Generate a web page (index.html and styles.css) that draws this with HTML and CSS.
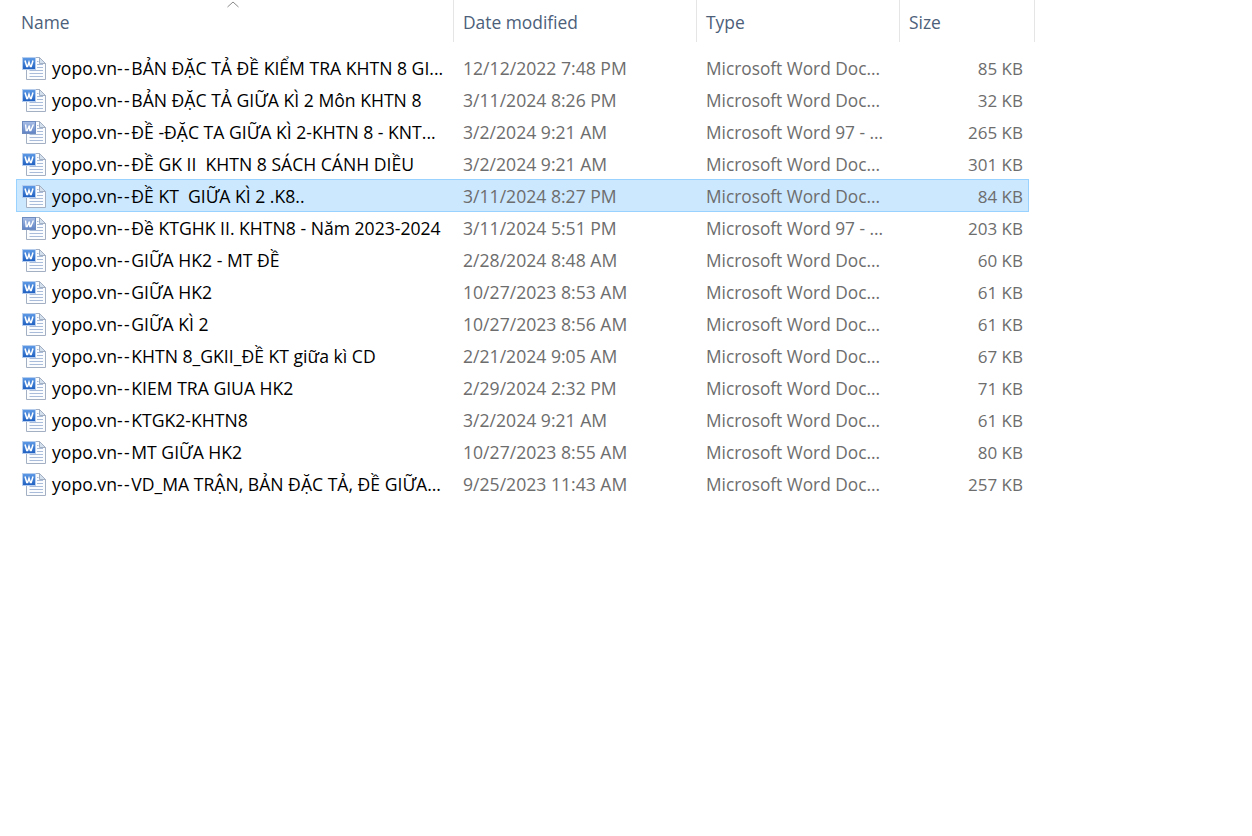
FILE: index.html
```html
<!DOCTYPE html>
<html lang="en">

<head>
  <meta charset="UTF-8">
  <title>Files</title>
  <link rel="stylesheet" href="styles.css">
</head>

<body>
  <svg class="defs" width="0" height="0">
    <linearGradient id="blue" x1="0" y1="0" x2="0" y2="1">
      <stop offset="0" stop-color="#5f9be6"/>
      <stop offset="1" stop-color="#1f5fc0"/>
    </linearGradient>
    <linearGradient id="pale" x1="0" y1="0" x2="0" y2="1">
      <stop offset="0" stop-color="#a9bfe6"/>
      <stop offset="1" stop-color="#5f82c4"/>
    </linearGradient>
    <symbol id="page" viewBox="0 0 24 24">
      <path d="M4.5 1.5H17.5L23.5 7.5V23.5H4.5Z" fill="#fbfcfe" stroke="#a3afc2"/>
      <path d="M17.5 1.5V7.5H23.5Z" fill="#d5e0ef" stroke="#a3afc2"/>
      <path d="M15 5.5H16.5M15 8.5H21M15 11.5H21M7.5 14.5H21M7.5 17.5H21M7.5 20.5H21" stroke="#a9bddb"/>
    </symbol>
    <symbol id="docx" viewBox="0 0 24 24">
      <use href="#page"/>
      <rect x="0.5" y="1.5" width="13" height="12" fill="url(#blue)" stroke="#b5cdee"/>
      <path d="M3 4.5L4.8 10.5H5.6L7 6.2L8.4 10.5H9.2L11 4.5" fill="none" stroke="#fff" stroke-width="1.5"/>
    </symbol>
    <symbol id="doc" viewBox="0 0 24 24">
      <use href="#page"/>
      <rect x="0.5" y="1.5" width="13" height="12" fill="url(#pale)" stroke="#6f8cc0"/>
      <path d="M3.6 4.5L4.2 10.5H5.2L7.4 5.5L7.8 10.5H8.8L11.4 4.5" fill="none" stroke="#fff" stroke-width="1.4"/>
    </symbol>
  </svg>

  <div class="list">
    <div class="head">
      <div class="col col-name">Name
        <svg class="sort" width="14" height="7" viewBox="0 0 14 7"><path d="M1.5 6L7 1L12.5 6" fill="none" stroke="#8a8a8a"/></svg>
      </div>
      <div class="col col-date">Date modified</div>
      <div class="col col-type">Type</div>
      <div class="col col-size">Size</div>
    </div>

    <div class="rows">
      <div class="row">
        <div class="name"><svg class="icon"><use href="#docx"/></svg><span>yopo.vn<span class="dash">--</span>BẢN ĐẶC TẢ ĐỀ KIỂM TRA KHTN 8 GI...</span></div>
        <div class="cell date">12/12/2022 7:48 PM</div><div class="cell type">Microsoft Word Doc...</div><div class="cell size">85 KB</div>
      </div>
      <div class="row">
        <div class="name"><svg class="icon"><use href="#docx"/></svg><span>yopo.vn<span class="dash">--</span>BẢN ĐẶC TẢ GIỮA KÌ 2 Môn KHTN 8</span></div>
        <div class="cell date">3/11/2024 8:26 PM</div><div class="cell type">Microsoft Word Doc...</div><div class="cell size">32 KB</div>
      </div>
      <div class="row">
        <div class="name"><svg class="icon"><use href="#doc"/></svg><span>yopo.vn<span class="dash">--</span>ĐỀ -ĐẶC TA GIỮA KÌ 2-KHTN 8 - KNT...</span></div>
        <div class="cell date">3/2/2024 9:21 AM</div><div class="cell type">Microsoft Word 97 - ...</div><div class="cell size">265 KB</div>
      </div>
      <div class="row">
        <div class="name"><svg class="icon"><use href="#docx"/></svg><span>yopo.vn<span class="dash">--</span>ĐỀ GK II&nbsp; KHTN 8 SÁCH CÁNH DIỀU</span></div>
        <div class="cell date">3/2/2024 9:21 AM</div><div class="cell type">Microsoft Word Doc...</div><div class="cell size">301 KB</div>
      </div>
      <div class="row selected">
        <div class="name"><svg class="icon"><use href="#docx"/></svg><span>yopo.vn<span class="dash">--</span>ĐỀ KT&nbsp; GIỮA KÌ 2 .K8..</span></div>
        <div class="cell date">3/11/2024 8:27 PM</div><div class="cell type">Microsoft Word Doc...</div><div class="cell size">84 KB</div>
      </div>
      <div class="row">
        <div class="name"><svg class="icon"><use href="#doc"/></svg><span>yopo.vn<span class="dash">--</span>Đề KTGHK II. KHTN8 - Năm 2023-2024</span></div>
        <div class="cell date">3/11/2024 5:51 PM</div><div class="cell type">Microsoft Word 97 - ...</div><div class="cell size">203 KB</div>
      </div>
      <div class="row">
        <div class="name"><svg class="icon"><use href="#docx"/></svg><span>yopo.vn<span class="dash">--</span>GIỮA HK2 - MT ĐỀ</span></div>
        <div class="cell date">2/28/2024 8:48 AM</div><div class="cell type">Microsoft Word Doc...</div><div class="cell size">60 KB</div>
      </div>
      <div class="row">
        <div class="name"><svg class="icon"><use href="#docx"/></svg><span>yopo.vn<span class="dash">--</span>GIỮA HK2</span></div>
        <div class="cell date">10/27/2023 8:53 AM</div><div class="cell type">Microsoft Word Doc...</div><div class="cell size">61 KB</div>
      </div>
      <div class="row">
        <div class="name"><svg class="icon"><use href="#docx"/></svg><span>yopo.vn<span class="dash">--</span>GIỮA KÌ 2</span></div>
        <div class="cell date">10/27/2023 8:56 AM</div><div class="cell type">Microsoft Word Doc...</div><div class="cell size">61 KB</div>
      </div>
      <div class="row">
        <div class="name"><svg class="icon"><use href="#docx"/></svg><span>yopo.vn<span class="dash">--</span>KHTN 8_GKII_ĐỀ KT giữa kì CD</span></div>
        <div class="cell date">2/21/2024 9:05 AM</div><div class="cell type">Microsoft Word Doc...</div><div class="cell size">67 KB</div>
      </div>
      <div class="row">
        <div class="name"><svg class="icon"><use href="#docx"/></svg><span>yopo.vn<span class="dash">--</span>KIEM TRA GIUA HK2</span></div>
        <div class="cell date">2/29/2024 2:32 PM</div><div class="cell type">Microsoft Word Doc...</div><div class="cell size">71 KB</div>
      </div>
      <div class="row">
        <div class="name"><svg class="icon"><use href="#docx"/></svg><span>yopo.vn<span class="dash">--</span>KTGK2-KHTN8</span></div>
        <div class="cell date">3/2/2024 9:21 AM</div><div class="cell type">Microsoft Word Doc...</div><div class="cell size">61 KB</div>
      </div>
      <div class="row">
        <div class="name"><svg class="icon"><use href="#docx"/></svg><span>yopo.vn<span class="dash">--</span>MT GIỮA HK2</span></div>
        <div class="cell date">10/27/2023 8:55 AM</div><div class="cell type">Microsoft Word Doc...</div><div class="cell size">80 KB</div>
      </div>
      <div class="row">
        <div class="name"><svg class="icon"><use href="#docx"/></svg><span>yopo.vn<span class="dash">--</span>VD_MA TRẬN, BẢN ĐẶC TẢ, ĐỀ GIỮA...</span></div>
        <div class="cell date">9/25/2023 11:43 AM</div><div class="cell type">Microsoft Word Doc...</div><div class="cell size">257 KB</div>
      </div>
    </div>
  </div>
</body>

</html>
```

FILE: styles.css
```css
body {
  margin: 0;
  background: #fff;
  font-family: "Open Sans", "Noto Sans", sans-serif;
  font-size: 17.6px;
  overflow: hidden;
}

.defs {
  display: block;
  height: 0;
}

.list {
  width: 1035px;
}

.head {
  display: flex;
  height: 42px;
  margin-bottom: 10px;
  color: #4c607a;
  font-size: 17.4px;
}

.col {
  box-sizing: border-box;
  padding: 2px 0 0 9px;
  line-height: 40px;
  border-right: 1px solid #e5e5e5;
}

.col-name {
  position: relative;
  width: 454px;
  padding-left: 21px;
}

.col-date {
  width: 243px;
}

.col-type {
  width: 203px;
}

.col-size {
  width: 135px;
}

.sort {
  position: absolute;
  left: 226px;
  top: 1px;
}

.rows {
  margin-left: 16px;
  width: 1013px;
}

.row {
  box-sizing: border-box;
  display: flex;
  align-items: center;
  height: 32px;
  border: 1px solid transparent;
  color: #6d6d6d;
}

.row.selected {
  height: 33px;
  margin-top: -1px;
  padding-top: 1px;
  background: #cce8ff;
  border-color: #99d1ff;
}

.name {
  display: flex;
  align-items: center;
  width: 437px;
  color: #000;
  white-space: nowrap;
}

.dash {
  letter-spacing: 1.5px;
}

.icon {
  flex: none;
  width: 24px;
  height: 24px;
  margin: 0 6px 0 5px;
}

.cell {
  box-sizing: border-box;
  white-space: nowrap;
}

.date {
  width: 243px;
  padding-left: 9px;
}

.type {
  width: 203px;
  padding-left: 9px;
  font-size: 17.3px;
}

.size {
  width: 128px;
  padding-right: 5px;
  text-align: right;
  font-size: 17px;
}
```
